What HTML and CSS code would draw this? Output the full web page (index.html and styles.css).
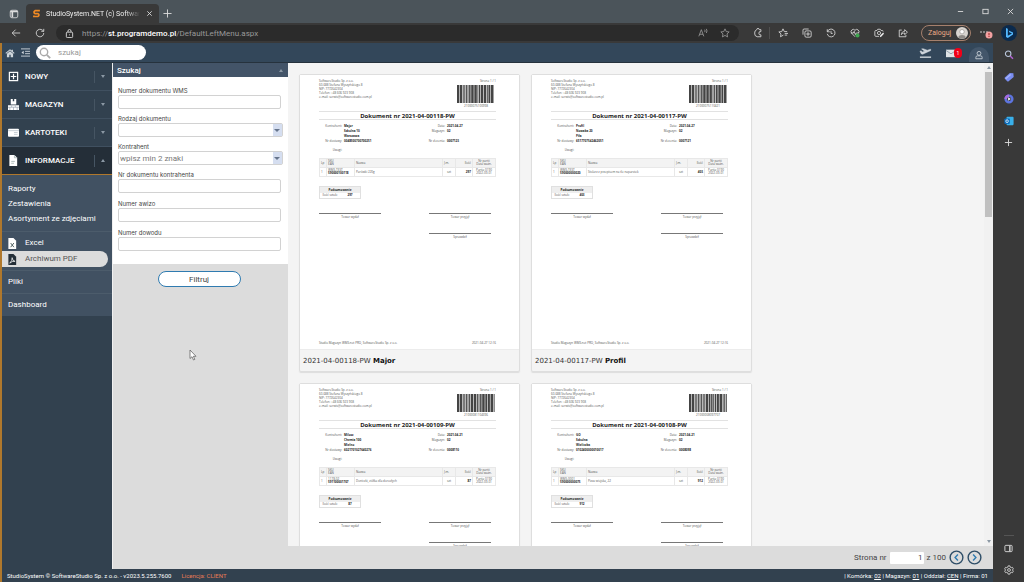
FILE: index.html
```html
<!DOCTYPE html>
<html lang="pl">
<head>
<meta charset="utf-8">
<title>StudioSystem.NET (c) SoftwareStudio</title>
<link rel="stylesheet" href="styles.css">
</head>
<body>
<header class="titlebar">
  <button class="chrome-btn workspace" aria-label="Obszary robocze"><svg class="i10" viewBox="0 0 12 12"><rect x="1.5" y="1.5" width="9" height="9" rx="2"/><path d="M1.5 3h9M4 4v6" stroke-width="2"/></svg></button>
  <div class="tab">
    <svg class="tab-logo" viewBox="0 0 10 12"><path d="M8.600 3V1.800H3.200L1.600 3.200v2l1.300 1H7l1.300 1v1.900L7 10.300H1.300V9" fill="none" stroke="#f08a24" stroke-width="2.400"/></svg>
    <span class="tab-title">StudioSystem.NET (c) SoftwareS</span>
    <button class="chrome-btn" aria-label="Zamknij kartę"><svg class="i7" viewBox="0 0 8 8"><path d="M1.500 1.500l5 5M6.500 1.500l-5 5"/></svg></button>
  </div>
  <button class="chrome-btn newtab" aria-label="Nowa karta"><svg class="i9" viewBox="0 0 10 10"><path d="M5 .5v9M.5 5h9"/></svg></button>
  <div class="window-controls">
    <button class="chrome-btn" aria-label="Minimalizuj"><svg class="i7" viewBox="0 0 8 8"><path d="M1 4h6"/></svg></button>
    <button class="chrome-btn" aria-label="Maksymalizuj"><svg class="i7" viewBox="0 0 8 8"><rect x="1" y="1.500" width="6" height="5"/></svg></button>
    <button class="chrome-btn" aria-label="Zamknij"><svg class="i7" viewBox="0 0 8 8"><path d="M1 1l6 6M7 1L1 7"/></svg></button>
  </div>
</header>

<div class="window">
  <div class="page">
    <div class="toolbar">
      <button class="chrome-btn" aria-label="Wstecz"><svg class="i10" viewBox="0 0 12 12"><path d="M11 6H1.500M5.500 2L1.500 6l4 4"/></svg></button>
      <button class="chrome-btn" aria-label="Odśwież"><svg class="i10" viewBox="0 0 12 12"><path d="M10.500 6A4.500 4.500 0 1 1 9 2.700L10.500 4M10.500 1v3h-3"/></svg></button>
      <div class="address">
        <svg class="i9" viewBox="0 0 10 10"><rect x="1.500" y="3.500" width="7" height="6" rx="1"/><path d="M3.300 3.500V2.300a1.700 1.700 0 0 1 3.400 0v1.200M5 6v1"/></svg>
        <span class="url">https://<b>st.programdemo.pl</b>/DefaultLeftMenu.aspx</span>
        <button class="chrome-btn dim" aria-label="Czytaj na głos"><svg class="i10" viewBox="0 0 12 12"><path d="M1 10l3-8 3 8M2 7.500h4M8 2q1 1.500 0 3M10 1q1.600 2.500 0 5"/></svg></button>
        <button class="chrome-btn dim" aria-label="Dodaj do ulubionych"><svg class="i10" viewBox="0 0 12 12"><path d="M6 1l1.500 3.300 3.500.4-2.600 2.400.7 3.600L6 8.900l-3.100 1.800.7-3.600L1 4.700l3.500-.4z"/></svg></button>
      </div>
      <div class="tools">
        <button class="chrome-btn" aria-label="Rozszerzenia"><svg class="i10" viewBox="0 0 12 12"><path d="M9.500 4.300V2H7.500a1.500 1.500 0 0 0-3 0A4 4 0 0 0 2 6a4 4 0 0 0 3 4.500h4.500V8.200A2 2 0 1 1 9.500 4.300z"/></svg></button>
        <span class="divider"></span>
        <button class="chrome-btn" aria-label="Ulubione"><svg class="i10" viewBox="0 0 12 12"><path d="M6.500 8.500L3 10.500l.6-3.400L1 4.700l3.500-.4L6 1l1.500 3.300H11M8 6.500h4M8 8.500h3"/></svg></button>
        <button class="chrome-btn" aria-label="Kolekcje"><svg class="i10" viewBox="0 0 12 12"><rect x="3.500" y="3.500" width="7.500" height="7.500" rx="1.500"/><path d="M8 1.200H2.500a1.300 1.300 0 0 0-1.300 1.300V8M7.200 5v4.500M5 7.200h4.500"/></svg></button>
        <button class="chrome-btn" aria-label="Historia"><svg class="i10" viewBox="0 0 12 12"><path d="M1.500 1.500v3h3M1.700 4.300A4.700 4.700 0 1 1 1.500 7M6 3.500v3h2"/></svg></button>
        <button class="chrome-btn" aria-label="Podstawowe elementy"><svg class="i10" viewBox="0 0 12 12"><path d="M6 10.500L1.800 6A2.500 2.500 0 0 1 6 2.800 2.500 2.500 0 0 1 10.200 6M1 6h3l1-2 1.500 4 1-2H11"/><circle cx="9" cy="9" r="2.400" fill="#3fa650" stroke="none"/></svg></button>
        <button class="chrome-btn" aria-label="Zrzut ekranu"><svg class="i10" viewBox="0 0 12 12"><path d="M6 10H2.200A1.200 1.200 0 0 1 1 8.800V4.200A1.200 1.200 0 0 1 2.200 3H3.500l1-1.500h3L8.500 3h1.300A1.200 1.200 0 0 1 11 4.200"/><circle cx="6" cy="6" r="1.900"/><path d="M7 11l.5-2L11 5.500 12 7 8.600 10.500z" fill="#eee" stroke="none"/></svg></button>
        <button class="chrome-btn" aria-label="Udostępnij"><svg class="i10" viewBox="0 0 12 12"><path d="M4.500 2.500H1.500v8h8V8.500M4 8c.3-3 1.800-4 4-4V2l3.300 3L8 8V6C6.300 6 5 6.500 4 8z"/></svg></button>
        <button class="login">Zaloguj <svg class="avatar" viewBox="0 0 12 12"><circle cx="6" cy="6" r="6" fill="#d8d4cf"/><circle cx="6" cy="4.700" r="2.200" fill="#fff" stroke="#8e8a86" stroke-width=".6"/><path d="M2 10.300a4.200 3.400 0 0 1 8 0A6 6 0 0 1 2 10.300z" fill="#8e8a86"/></svg></button>
        <button class="chrome-btn" aria-label="Więcej"><svg class="more" viewBox="0 0 14 12"><g fill="#ddd" stroke="none"><circle cx="2" cy="5" r=".8"/><circle cx="5" cy="5" r=".8"/><circle cx="8" cy="5" r=".8"/></g><circle cx="10" cy="8" r="3.500" fill="#f2a0a0" stroke="none"/><path d="M10 6v2.300M10 9v1" stroke="#922"/></svg></button>
      </div>
    </div>

    <div class="app">
      <header class="app-header">
        <a href="#" aria-label="Start"><svg class="i10" viewBox="0 0 12 12"><path d="M6 1.500L.5 6l.8.9L6 3l4.700 3.900.8-.9L9.500 4.300V2H8v1zM2.300 7v4h2.900V8.200h1.600V11h2.900V7L6 4z" fill="#cfd6dc" stroke="none"/></svg></a>
        <button class="chrome-btn" aria-label="Zwiń menu"><svg class="i9" viewBox="0 0 10 10"><path d="M0 1h10M4.500 3.700H10M4.500 6.300H10M0 9h10" stroke="#cfd6dc"/><path d="M3 3v4L.5 5z" fill="#cfd6dc" stroke="none"/></svg></button>
        <label class="quick">
          <svg class="quick-icon" viewBox="0 0 12 12"><circle cx="5" cy="5" r="3.700" stroke="#aaa" stroke-width="1.400"/><path d="M7.800 7.800l3.400 3.400" stroke="#aaa" stroke-width="1.800"/></svg>
          <input type="text" placeholder="szukaj" aria-label="szukaj">
        </label>
        <div class="header-icons">
          <svg class="plane" viewBox="0 0 14 12"><path d="M1 10.500h12" stroke="#cfd6dc" stroke-width="1.500"/><path d="M1 4l1.200-.3 1.500 1.100L6 4 2.800 1.600l1.500-.3L9 3l2.500-.9c1.500-.4 1.900.8.8 1.400L4 7.300 2.500 7z" fill="#cfd6dc" stroke="#cfd6dc" stroke-width=".5"/></svg>
          <a href="#" class="mail" aria-label="Wiadomości"><svg class="i10" viewBox="0 0 12 12"><rect x="0" y="2" width="12" height="9" fill="#dfe3e6" stroke="none"/><path d="M0 3l6 4 6-4" stroke="#8796a3"/></svg><span class="badge">1</span></a>
          <button class="user" aria-label="Użytkownik"><svg class="i10" viewBox="0 0 12 12"><circle cx="6" cy="4" r="2.300" stroke="#cfd6dc"/><path d="M2.200 10.500V9q0-2 2-2h3.600q2 0 2 2v1.500z" stroke="#cfd6dc"/></svg></button>
        </div>
      </header>

      <div class="workspace-row">
        <nav class="nav">
          <button class="nav-group"><svg class="nav-icon" viewBox="0 0 12 12"><rect x="1.500" y="1.500" width="9" height="9" stroke="#fff" stroke-width="1.300"/><path d="M6 3v6M3 6h6" stroke="#fff" stroke-width="1.300"/></svg><span>NOWY</span><i class="caret down"></i></button>
          <button class="nav-group"><svg class="nav-icon" viewBox="0 0 12 12"><path d="M3 0h2.200v2.500h1.600V0H9v6H3zM0 6.700h12V12H0z" fill="#fff" stroke="none"/><path d="M0 9h12M4 7v2M8 7v2M2 9v3M6 9v3M10 9v3" stroke="#8090a0" stroke-width=".6"/></svg><span>MAGAZYN</span><i class="caret down"></i></button>
          <button class="nav-group"><svg class="nav-icon" viewBox="0 0 12 12"><rect x="0" y="2" width="12" height="8.500" rx="1" fill="#fff" stroke="none"/><path d="M0 4h12M6.500 6h4M6.500 8h4" stroke="#a9b4be" stroke-width=".7"/></svg><span>KARTOTEKI</span><i class="caret down"></i></button>
          <button class="nav-group open"><svg class="nav-icon" viewBox="0 0 12 12"><path d="M1.500 0H7l3 3v9H1.500z" fill="#fff" stroke="none"/><path d="M7 0v3h3M3.500 7h4M3.500 9h3" stroke="#9aa" stroke-width=".8"/></svg><span>INFORMACJE</span><i class="caret up"></i></button>
          <div class="submenu">
            <div class="sub-block links">
              <a href="#">Raporty</a><a href="#">Zestawienia</a><a href="#">Asortyment ze zdjęciami</a>
            </div>
            <div class="sub-block reports">
              <a href="#"><svg class="nav-icon" viewBox="0 0 12 12"><path d="M1.500 0H7l3 3v9H1.500z" fill="#fff" stroke="none"/><path d="M4 5.500l3.500 4.500M7.500 5.500L4 10" stroke="#455" stroke-width="1"/></svg>Excel</a>
              <a href="#" class="current"><svg class="nav-icon" viewBox="0 0 12 12"><path d="M1.500 0H7l3 3v9H1.500z" fill="#252f38" stroke="none"/><path d="M3 10q3-3 2.600-6Q6 8 8.800 8 5.500 7.500 3 10" stroke="#fff" stroke-width=".8"/></svg>Archiwum PDF</a>
            </div>
            <div class="sub-block single"><a href="#">Pliki</a></div>
            <div class="sub-block single"><a href="#">Dashboard</a></div>
          </div>
        </nav>

        <form class="filter">
          <div class="filter-title">Szukaj<i class="caret up"></i></div>
          <div class="fields">
            <div class="field"><label for="f1">Numer dokumentu WMS</label><input id="f1" type="text"></div>
            <div class="field wide"><label for="f2">Rodzaj dokumentu</label><span class="combo"><select id="f2"><option></option></select></span></div>
            <div class="field wide"><label for="f3">Kontrahent</label><span class="combo"><select id="f3"><option>wpisz min 2 znaki</option></select></span></div>
            <div class="field"><label for="f4">Nr dokumentu kontrahenta</label><input id="f4" type="text"></div>
            <div class="field"><label for="f5">Numer awizo</label><input id="f5" type="text"></div>
            <div class="field"><label for="f6">Numer dowodu</label><input id="f6" type="text"></div>
          </div>
          <button type="button" class="submit">Filtruj</button>
          <svg class="cursor" viewBox="0 0 8 12"><path d="M1 1v8.500l2-1.800L4.500 11l1.300-.6L4.400 7.300H7z" fill="#fff" stroke="#555" stroke-width=".7"/></svg>
        </form>

        <main class="results">
          <div class="gallery-row">
            <div class="gallery" id="gallery"></div>
            <div class="scrollbar"><i class="caret up"></i><span class="thumb"></span><i class="caret down"></i></div>
          </div>
          <div class="pager">
            <label for="pg">Strona nr</label><input id="pg" type="text" value="1"><span>z 100</span>
            <button type="button" aria-label="Poprzednia"><svg viewBox="0 0 16 16"><circle cx="8" cy="8" r="6.800"/><path d="M9.500 4.800L6.500 8l3 3.200" stroke="#2f7bb0"/></svg></button>
            <button type="button" aria-label="Następna"><svg viewBox="0 0 16 16"><circle cx="8" cy="8" r="6.800"/><path d="M6.500 4.800L9.500 8l-3 3.200" stroke="#2f7bb0"/></svg></button>
          </div>
        </main>
      </div>

      <footer class="status">
        <span>StudioSystem © SoftwareStudio Sp. z o.o. - v2023.5.255.7600</span>
        <a href="#" class="license">Licencja: CLIENT</a>
        <span class="status-right">| Komórka: <u>02</u> | Magazyn: <u>01</u> | Oddział: <u>CEN</u> | Firma: 01</span>
      </footer>
    </div>
  </div>

  <aside class="edge-bar">
    <button class="bing" aria-label="Bing"><svg viewBox="0 0 16 16"><circle cx="8" cy="8" r="8" fill="#0b2a4c"/><path d="M5 3l1.800.7v7.100L11 8.500 8.300 7.200 7.700 5.500l4.300 2v2L6.800 13 5 12z" fill="#53b9ff"/></svg></button>
    <button class="chrome-btn" aria-label="Wyszukaj"><svg class="i10" viewBox="0 0 12 12"><circle cx="5" cy="4.500" r="3.300" stroke="#b9c7dc" stroke-width="1.300"/><path d="M7.500 7.200l3.300 3.300" stroke="#b060d0" stroke-width="1.800"/></svg></button>
    <button class="chrome-btn" aria-label="Zakupy"><svg class="i10" viewBox="0 0 12 12"><path d="M1 6.500L7 1.300l4.300.2.300 4.500-6 5.200q-1 .6-1.800-.2L1 8q-.6-.8 0-1.500z" fill="#7a8df0" stroke="none"/><path d="M2 8l6-5" stroke="#a5b5ff" stroke-width="1.500"/></svg></button>
    <button class="chrome-btn" aria-label="Microsoft 365"><svg class="i10" viewBox="0 0 12 12"><circle cx="6" cy="6" r="4" stroke="#5d74df" stroke-width="3"/><path d="M6 2a4 4 0 0 0-4 4" stroke="#a66be0" stroke-width="3"/><path d="M5 4l3 2-3 2z" fill="#fff" stroke="none"/></svg></button>
    <button class="chrome-btn" aria-label="Outlook"><svg class="i10" viewBox="0 0 12 12"><rect x="3" y="1" width="8.500" height="10" rx="1" fill="#39b0ea" stroke="none"/><rect x="0.500" y="3" width="6.500" height="6.500" rx="1" fill="#0a6cbd" stroke="none"/><ellipse cx="3.700" cy="6.200" rx="1.500" ry="1.700" stroke="#fff" stroke-width=".9"/></svg></button>
    <button class="chrome-btn" aria-label="Dodaj"><svg class="i9" viewBox="0 0 10 10"><path d="M5 1v8M1 5h8"/></svg></button>
    <div class="edge-bottom">
      <button class="chrome-btn" aria-label="Panel boczny"><svg class="i9" viewBox="0 0 10 10"><rect x="1" y="1.500" width="8" height="7" rx="1"/><path d="M6.500 2v6" stroke-width="1.500"/></svg></button>
      <button class="chrome-btn" aria-label="Ustawienia"><svg class="i10" viewBox="0 0 12 12"><circle cx="6" cy="6" r="1.700"/><path d="M5 1h2l.4 1.500 1.300.7 1.500-.4 1 1.800L10.100 6l1.100 1.400-1 1.800-1.500-.4-1.300.7L7 11H5l-.4-1.500-1.300-.7-1.500.4-1-1.800L1.900 6 .8 4.600l1-1.800 1.500.4 1.300-.7z"/></svg></button>
    </div>
  </aside>
</div>
<script src="app.js"></script>
</body>
</html>
```
FILE: styles.css
```css
* { box-sizing: border-box; }
body {
  margin: 0;
  height: 100vh;
  display: flex;
  flex-direction: column;
  overflow: hidden;
  background: #393939;
  font-family: Roboto, "Open Sans", sans-serif;
  font-size: 8px;
  color: #444;
}
button, input, select { font: inherit; color: inherit; margin: 0; padding: 0; border: 0; background: none; min-width: 0; }
a { color: inherit; text-decoration: none; }
svg { display: block; flex: none; fill: none; stroke: #ddd; stroke-width: 1; }
.i7 { width: 7px; height: 7px; }
.i9 { width: 9px; height: 9px; }
.i10 { width: 10px; height: 10px; }
.chrome-btn { display: flex; flex: none; align-items: center; }
.caret { width: 0; height: 0; border: 2px solid transparent; }
.caret.down { border-top: 3px solid #8b98a4; border-bottom: 0; }
.caret.up { border-bottom: 3px solid #8b98a4; border-top: 0; }

/* browser frame */
.titlebar { flex: none; display: flex; align-items: stretch; height: 23px; padding: 4px 7px 0 9px; background: #4b545a; }
.workspace { margin-right: 7px; }
.tab { display: flex; align-items: center; gap: 6px; width: 133px; padding: 0 6px 0 7px; border-radius: 4px 4px 0 0; background: #393939; color: #eee; font-size: 7px; }
.tab-logo { width: 7px; height: 9px; }
.tab-title { flex: 1; min-width: 0; overflow: hidden; white-space: nowrap; -webkit-mask-image: linear-gradient(90deg, #000 85%, transparent); mask-image: linear-gradient(90deg, #000 85%, transparent); }
.newtab { margin-left: 4px; }
.window-controls { display: flex; gap: 18px; margin: 0 3px 4px auto; }
.window { flex: 1; min-height: 0; display: flex; }
.page { flex: 1; min-width: 0; display: flex; flex-direction: column; }
.toolbar { flex: none; display: flex; align-items: center; gap: 14px; height: 20px; padding-left: 11px; color: #ddd; }
.address { flex: 1; display: flex; align-items: center; gap: 12px; height: 16px; margin-left: -3px; padding: 0 9px; border-radius: 8px; background: #2b2b2b; }
.url { flex: 1; font-size: 8px; color: #999; margin-left: -4px; }
.url b { font-weight: 500; color: #fff; }
.dim svg { stroke: #999; }
.tools { display: flex; align-items: center; gap: 14px; }
.tools .chrome-btn:first-child { margin-right: -2px; }
.divider { width: 1px; height: 12px; margin: 0 -6px; background: #505050; }
.login { display: flex; align-items: center; justify-content: space-between; width: 50px; height: 16px; margin: 0 -6px 0 -1px; padding: 0 2px 0 6px; border: 1px solid #a5806d; border-radius: 8px; color: #eaa987; font-size: 7px; }
.avatar { width: 12px; height: 12px; stroke: none; }
.more { width: 14px; height: 12px; }
.edge-bar { flex: none; width: 31px; display: flex; flex-direction: column; align-items: center; gap: 12px; padding-bottom: 7px; }
.bing { margin: 2px 0 4px; }
.bing svg { width: 16px; height: 16px; stroke: none; }
.bing + .chrome-btn { margin-top: -7px; }
.edge-bottom { display: flex; flex-direction: column; align-items: center; gap: 12px; margin-top: auto; padding-top: 8px; border-top: 1px solid #555; }

/* application */
.app { flex: 1; min-height: 0; display: flex; flex-direction: column; border-left: 2px solid #b0782c; background: #32414f; }
.app-header { flex: none; display: flex; align-items: center; gap: 6px; height: 20px; padding: 0 4px 0 3px; background: #33475a; border-bottom: 1px solid #26323d; }
.quick { display: flex; align-items: center; gap: 7px; width: 110px; height: 15px; padding: 0 3px; border-radius: 8px; background: #fff; }
.quick-icon { width: 12px; height: 12px; }
.quick input { flex: 1; font-size: 8px; outline: 0; }
.quick input::placeholder { color: #999; opacity: 1; }
.header-icons { display: flex; align-items: center; align-self: stretch; gap: 12px; margin-left: auto; }
.plane { width: 13px; height: 12px; margin-right: 2px; }
.mail { display: flex; position: relative; margin-right: 1px; }
.badge { position: absolute; left: 8px; top: 0; width: 8px; height: 10px; border-radius: 4px; background: #f00018; color: #fff; font-size: 5px; line-height: 10px; text-align: center; }
.user { align-self: flex-end; display: flex; justify-content: center; align-items: center; width: 20px; height: 15px; border-radius: 10px 10px 0 0; background: #43566a; }
.workspace-row { flex: 1; min-height: 0; display: flex; }

.nav { flex: none; width: 110px; color: #fff; }
.nav-group { display: flex; align-items: center; gap: 6px; width: 100%; height: 28px; padding: 0 7px 0 6px; border-bottom: 1px solid #405060; text-align: left; font-weight: 500; font-size: 8px; }
.nav-group span { flex: 1; line-height: 12px; border-right: 1px solid #465563; }
.nav-group.open { background: #242e38; border-bottom-color: #b0782c; }
.nav-icon { width: 11px; height: 11px; }
.submenu { background: #415162; font-size: 8px; }
.submenu a { display: flex; align-items: center; line-height: 16px; }
.sub-block { border-top: 1px solid #4c5c6b; }
.sub-block:first-child { border-top: 0; }
.links { padding: 6px 6px 5px; }
.links a { white-space: nowrap; height: 15px; }
.reports { padding: 3px 4px 3px 0; }
.reports a { gap: 7px; height: 16px; padding-left: 5px; }
.reports .current { border-radius: 0 8px 8px 0; background: #dcdcdc; color: #555; }
.single { padding: 3px 6px; }

.filter { position: relative; flex: none; width: 176px; display: flex; flex-direction: column; align-items: center; border-left: 1px solid #f0f0f0; background: #dcdcdc; }
.filter-title { display: flex; justify-content: space-between; align-items: center; width: 100%; height: 14px; padding: 0 5px 0 4px; background: #435468; color: #fff; font-size: 8px; font-weight: 500; }
.fields { width: 100%; display: flex; flex-direction: column; gap: 6px; padding: 10px 7px 13px 5px; background: #fff; }
.field { display: flex; flex-direction: column; }
.field.wide { margin-right: -2px; }
.field.wide + .field:not(.wide) ~ .field { padding-top: 1px; }
.field label { font: 6px/8px Inter, sans-serif; }
.field input, .combo { width: 100%; height: 14px; border: 1px solid #d2d2d2; border-radius: 2px; background: #fff; }
.combo { position: relative; display: flex; }
.combo select { flex: 1; appearance: none; padding-left: 1px; font-size: 8px; color: #777; }
.combo::before { content: ""; position: absolute; right: 0; top: 0; width: 9px; height: 12px; background: #d5def0; pointer-events: none; }
.combo::after { content: ""; position: absolute; right: 2px; top: 5px; border: 3px solid transparent; border-top-color: #66758c; border-bottom: 0; pointer-events: none; }
.submit { width: 83px; height: 16px; margin: 7px 3px 0 0; border: 1px solid #2f7bb0; border-radius: 8px; background: #fff; font-size: 8px; }
.cursor { position: absolute; left: 76px; top: 286px; width: 8px; height: 12px; }

.results { flex: 1; min-width: 0; display: flex; flex-direction: column; background: #f4f4f4; }
.gallery-row { flex: 1; min-height: 0; display: flex; }
.gallery { flex: 1; min-width: 0; display: flex; flex-wrap: wrap; align-content: flex-start; gap: 11px; padding: 11px; overflow: hidden; }
.scrollbar { flex: none; width: 9px; display: flex; flex-direction: column; align-items: center; padding: 3px 0; background: #f1f1f1; }
.scrollbar .thumb { width: 7px; height: 145px; margin: 3px 0 auto; background: #c0c0c0; }
.pager { flex: none; display: flex; align-items: center; justify-content: flex-end; gap: 3px; height: 23px; padding-right: 11px; background: #dcdcdc; font-size: 8px; }
.pager input { width: 34px; height: 12px; padding-right: 1px; background: #fff; text-align: right; border-radius: 1px; }
.pager svg { width: 15px; height: 15px; stroke: #2e4e68; stroke-width: 1.500; }
.status { flex: none; display: flex; align-items: center; gap: 10px; height: 13px; padding: 0 5px; color: #fff; font-size: 6px; line-height: 8px; }
.license { color: #e77b55; }
.status-right { margin-left: auto; }

/* document thumbnails */
.card { width: 221px; border: 1px solid #dedede; border-radius: 2px; box-shadow: 0 1px 1px #ddd; }
.card-caption { height: 22px; padding-left: 3px; font: 7px/22px "DejaVu Sans", sans-serif; color: #333; border-top: 1px solid #ececec; }
.card-caption b { color: #111; }
.sheet { display: flex; flex-direction: column; height: 274px; padding: 4px 23px 4px 19px; background: #fff; font: 3px/4px "Open Sans", sans-serif; color: #555; }
.sheet b { color: #222; }
.sheet-head { display: flex; justify-content: space-between; height: 32px; white-space: pre-line; }
.code { display: flex; flex-direction: column; align-items: center; width: 40px; }
.code span:first-child { align-self: flex-end; }
.bars { width: 38px; height: 18px; margin: 2px 0 1px; stroke: none; fill: #444; }
.sheet h2 { margin: 0; height: 9px; border: solid #e2e2e2; border-width: 1px 0; font: 700 6px/8px "Open Sans", sans-serif; text-align: center; color: #222; }
.meta { display: grid; grid-template-columns: 23px 76px 23px 1fr; column-gap: 2px; grid-auto-rows: 5px; padding-top: 4px; height: 28px; }
.meta span { text-align: right; }
.notes { width: 23px; height: 10px; text-align: right; }
.sheet table { border-collapse: collapse; border: 1px solid #e0e0e0; table-layout: fixed; }
.lines { width: 100%; }
.lines td, .lines th { height: 9px; padding: 0 1px; border: 1px solid #e8e8e8; font-weight: 400; text-align: left; line-height: 3px; }
.lines th { background: #f3f3f3; }
.lines .num { text-align: right; }
.lines .mid { text-align: center; }
.sum { width: 42px; margin-top: 9px; }
.sum th, .sum td { height: 6px; padding: 0 1px; line-height: 4px; text-align: center; }
.sum th { background: #eee; color: #222; }
.signs { display: grid; grid-template-columns: 62px 62px; justify-content: space-between; row-gap: 14px; padding-right: 5px; margin-top: 14px; text-align: center; }
.signs span { border-top: 1px solid #777; padding-top: 1px; }
.signs span:last-child { grid-column: 2; }
.sheet-foot { display: flex; justify-content: space-between; margin-top: auto; }
```
FILE: app.js
```js
const docs = [
  { nr: "2021-04-00118-PW", name: "Major", street: "Szkolna 10", city: "Warszawa", phone: "0048500700700251", date: "2021-04-27", cell: "02", order: "0007123", sku: "WMS-TEST", ean: "590000100118", item: "Parówki 220g", qty: "297", code: "21000075100998" },
  { nr: "2021-04-00117-PW", name: "Profil", street: "Nowaka 20", city: "Piła", phone: "6517707542462051", date: "2021-04-27", cell: "02", order: "0007121", sku: "WMS-TEST", ean: "590000000020", item: "Stolarz z przepisem na tle naparstek", qty: "403", code: "21000075110421" },
  { nr: "2021-04-00109-PW", name: "Milosz", street: "Chemia 100", city: "Mielno", phone: "6021701027640276", date: "2021-04-21", cell: "02", order: "0008110", sku: "1178-02", ean: "591100001707", item: "Doniczki, ziółka dla dorosłych", qty: "87", code: "21000081104396" },
  { nr: "2021-04-00108-PW", name: "GO", street: "Szkolna", city: "Wieliczka", phone: "0102400000010017", date: "2021-04-21", cell: "02", order: "0008098", sku: "WMS-0001", ean: "590000000075", item: "Pizza wiejska, 22", qty: "912", code: "21000008097707" }
];

// Bar widths follow from the digits of the document code.
function bars(code) {
  let x = 0, out = "";
  for (const d of code + code + code) {
    const w = 1 + (Number(d) * 7 % 4) / 2;
    if (x + w > 38) break;
    out += `<rect x="${x}" width="${w}" height="18"/>`;
    x += w + 0.6;
  }
  return `<svg class="bars" viewBox="0 0 38 18" preserveAspectRatio="none">${out}</svg>`;
}

document.getElementById("gallery").innerHTML = docs.map(d => `
<article class="card">
  <div class="sheet">
    <div class="sheet-head">
      <div>SoftwareStudio Sp. z o.o.
60-688 Stefana Wyszyńskiego 8
NIP: 7772642304
Telefon: +48 606 923 908
e-mail: serwis@softwarestudio.com.pl</div>
      <div class="code"><span>Strona 1 / 1</span>${bars(d.code)}<span>${d.code}</span></div>
    </div>
    <h2>Dokument nr ${d.nr}</h2>
    <div class="meta">
      <span>Kontrahent:</span><b>${d.name}</b><span>Data:</span><b>${d.date}</b>
      <span></span><b>${d.street}</b><span>Magazyn:</span><b>${d.cell}</b>
      <span></span><b>${d.city}</b><span></span><b></b>
      <span>Nr dostawy:</span><b>${d.phone}</b><span>Nr zlecenia:</span><b>${d.order}</b>
    </div>
    <div class="notes">Uwagi:</div>
    <table class="lines">
      <colgroup><col style="width:7px"><col style="width:28px"><col><col style="width:13px"><col style="width:17px"><col style="width:23px"></colgroup>
      <tr><th>Lp</th><th>SKU<br>EAN</th><th>Nazwa</th><th>J.m.</th><th class="num">Ilość</th><th class="mid">Nr partii<br>Data ważn.</th></tr>
      <tr><td>1</td><td>${d.sku}<br><b>${d.ean}</b></td><td>${d.item}</td><td class="mid">szt</td><td class="num"><b>${d.qty}</b></td><td class="mid">Partia 0190<br>2022-09-01</td></tr>
    </table>
    <table class="sum">
      <tr><th colspan="2">Podsumowanie</th></tr>
      <tr><td>Ilość sztuk:</td><td><b>${d.qty}</b></td></tr>
    </table>
    <div class="signs"><span>Towar wydał</span><span>Towar przyjął</span><span>Sprawdził</span></div>
    <div class="sheet-foot"><span>Studio Magazyn WMS.net PRO, SoftwareStudio Sp. z o.o.</span><span>2021-04-27 12:16</span></div>
  </div>
  <div class="card-caption">${d.nr} <b>${d.name}</b></div>
</article>`).join("");
```
